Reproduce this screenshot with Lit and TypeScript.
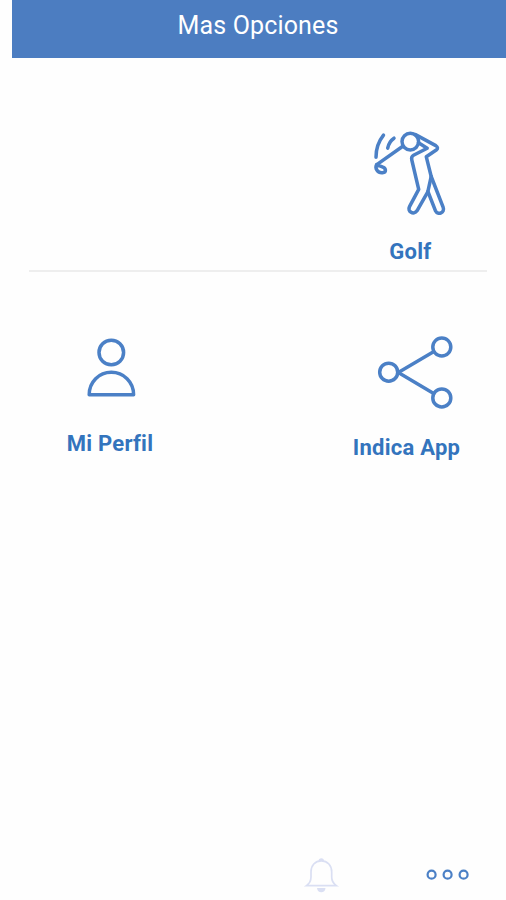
import { LitElement, html, css, svg } from "lit";
import { customElement, property } from "lit/decorators.js";

const golf = svg`
  <path d="M23.5 15.2C18.5 21.5 16 29 16 37.2M34 18.2C30.5 20.5 28.5 24 27.7 28.2"/>
  <path d="M42.8 26.2L16.8 44.6"/>
  <path d="M16.6 44.6C14.6 48.5 17.7 53.2 22.4 52.8C26.7 52.3 26.2 48 22.3 46.8C19.7 45.7 18 45.7 16.6 44.6Z"/>
  <circle cx="50.3" cy="21.6" r="8.3"/>
  <path d="M55.5 14.6L75.8 25.6Q79 27.8 76.2 30L66.3 36.8L71.2 56.5L83.1 87.2C85.2 92.6 78 95.8 75.4 90.7L67.9 71.5"/>
  <path d="M58.5 22.8L67.2 28.3L53.5 35.2Q51 36.5 51.8 40L58.7 69.4L49.5 86.6C46.9 91.4 53.7 95.5 57 90.8L67.8 71.8L71.2 56.5"/>`;

const profile = svg`
  <circle cx="41.3" cy="27.5" r="12.3"/>
  <path d="M19.2 69.7C19.2 57 29 47.3 41.3 47.3S63.6 57 63.6 69.7Z"/>`;

const share = svg`
  <circle cx="18.7" cy="47.2" r="9"/>
  <circle cx="71.8" cy="22" r="9"/>
  <circle cx="71.8" cy="72.9" r="9"/>
  <path d="M63.5 26.7L28.3 47.4L63.7 68.5"/>`;

@customElement("option-tile")
class OptionTile extends LitElement {
  @property() label = "";
  @property({ attribute: false }) art: unknown = null;

  static styles = css`
    :host {
      display: flex;
      flex-direction: column;
      align-items: center;
      color: #3374bd;
    }
    svg {
      display: block;
      width: 100px;
      height: 100px;
      fill: none;
      stroke: #4b80c6;
      stroke-width: 3.5;
      stroke-linecap: round;
      stroke-linejoin: round;
    }
    .label {
      font: 700 22px/28px Roboto, sans-serif;
      white-space: nowrap;
      margin-top: var(--label-gap, 0);
      transform: translateX(var(--label-shift, 0));
      letter-spacing: 0.25px;
    }
  `;

  render() {
    return html`<svg viewBox="0 0 100 100">${this.art}</svg>
      <span class="label">${this.label}</span>`;
  }
}

@customElement("app-root")
class AppRoot extends LitElement {
  static styles = css`
    :host {
      display: flex;
      flex-direction: column;
      height: 900px;
      background: #fefefe;
      overflow: hidden;
      font-family: Roboto, sans-serif;
    }
    header {
      box-sizing: border-box;
      margin-left: 12px;
      height: 57.5px;
      padding-bottom: 6.5px;
      padding-right: 2px;
      display: flex;
      align-items: center;
      justify-content: center;
      background: #4c7dc1;
      color: #fff;
      font-size: 25px;
      letter-spacing: 0.15px;
    }
    .row {
      display: flex;
      justify-content: space-between;
    }
    .first {
      box-sizing: border-box;
      height: 212px;
      padding: 62.5px 46px 0 0;
      justify-content: flex-end;
    }
    .golf {
      --label-gap: 17.5px;
      --label-shift: 0.4px;
    }
    .divider {
      height: 2.5px;
      margin: 0 19px 0 29px;
      background: #eee;
    }
    .second {
      padding: 53px 36px 0 70px;
    }
    .profile {
      width: 100px;
      --label-gap: 5px;
      --label-shift: -10px;
    }
    .share {
      width: 100px;
      --label-gap: 9px;
      --label-shift: -13.5px;
    }
    nav {
      margin-top: auto;
      height: 55px;
      padding-right: 26px;
      display: flex;
      justify-content: flex-end;
    }
    nav svg {
      display: block;
      fill: none;
    }
    .bell {
      margin-right: 66px;
      stroke: #dadff3;
      stroke-width: 1.7;
    }
    .bell .solid {
      fill: #dadff3;
      stroke: none;
    }
    .more {
      stroke: #4b80c6;
      stroke-width: 2.2;
    }
  `;

  render() {
    return html`
      <header>Mas Opciones</header>
      <section class="row first">
        <option-tile class="golf" label="Golf" .art=${golf}></option-tile>
      </section>
      <div class="divider"></div>
      <section class="row second">
        <option-tile class="profile" label="Mi Perfil" .art=${profile}></option-tile>
        <option-tile class="share" label="Indica App" .art=${share}></option-tile>
      </section>
      <nav>
        <svg class="bell" width="44" height="55" viewBox="0 0 44 55">
          <path d="M6.5 40.6Q11 37.5 11 32V27C11 20.5 15 15.9 21.3 15.9S31.7 20.5 31.7 27V32Q31.7 37.5 36.3 40.6Z"/>
          <path class="solid" d="M18.6 16A2.7 2.7 0 0 1 24 16ZM17 43H25.5Q25 47.3 21.3 47.3T17 43Z"/>
        </svg>
        <svg class="more" width="70" height="55" viewBox="0 0 70 55">
          <circle cx="21.6" cy="29.7" r="4"/>
          <circle cx="37.6" cy="29.7" r="4"/>
          <circle cx="53.6" cy="29.7" r="4"/>
        </svg>
      </nav>
    `;
  }
}
